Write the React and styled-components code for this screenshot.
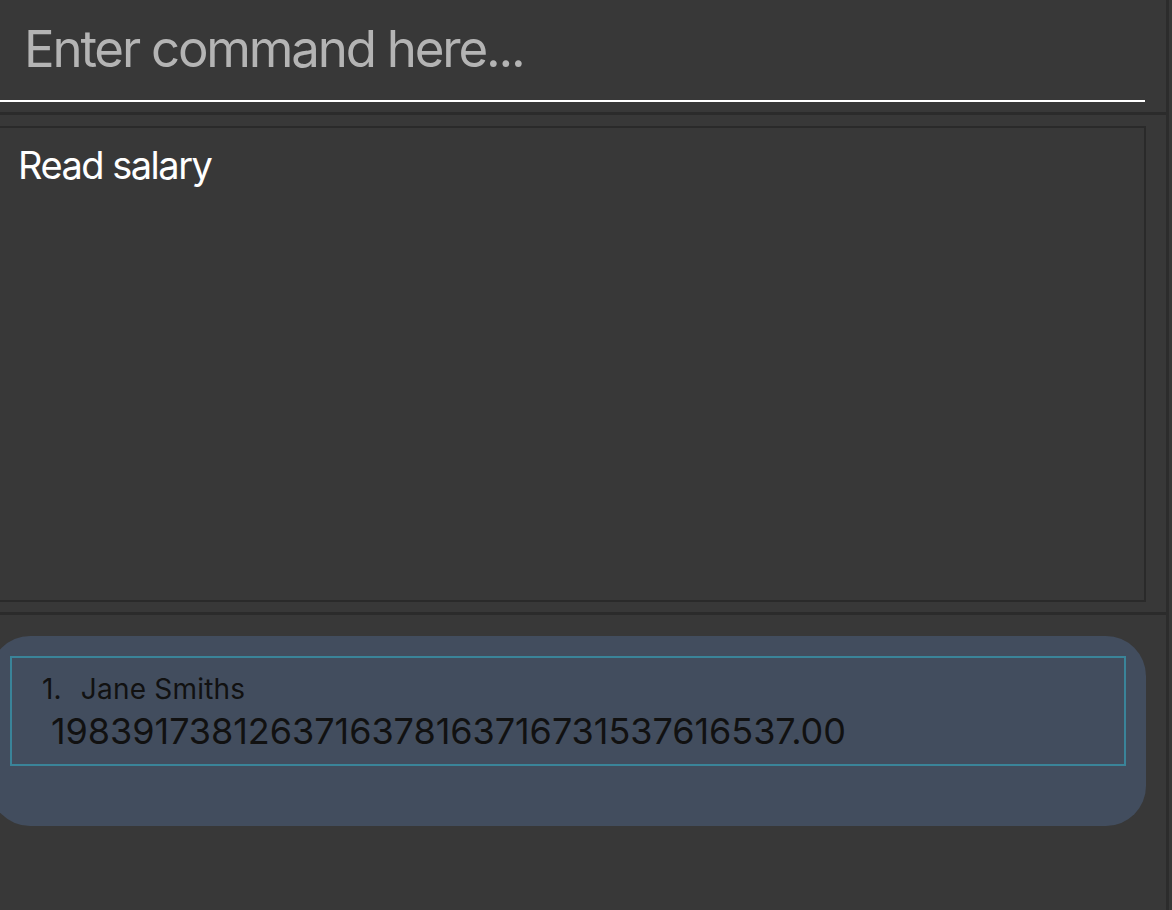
import React from "react";
import styled, { createGlobalStyle } from "styled-components";

const Global = createGlobalStyle`
  html, body {
    margin: 0;
    padding: 0;
    background: #383838;
    overflow: hidden;
  }
  body {
    font-family: Inter, "Open Sans", "Liberation Sans", sans-serif;
  }
`;

const Window = styled.div`
  display: flex;
  width: 1172px;
  height: 910px;
  background: #383838;
`;

const Main = styled.div`
  width: 1166px;
  display: flex;
  flex-direction: column;
  border-right: 3px solid #2c2c2c;
  overflow: hidden;
`;

const CommandBox = styled.div`
  height: 112px;
  display: flex;
  flex-direction: column;
  box-sizing: border-box;
`;

const CommandInput = styled.input`
  width: 1145px;
  height: 102px;
  box-sizing: border-box;
  background: transparent;
  border: none;
  border-bottom: 2px solid #ffffff;
  outline: none;
  padding: 0 0 4px 24px;
  font-family: Inter, "Liberation Sans", sans-serif;
  font-size: 51px;
  letter-spacing: -2.2px;
  color: #ffffff;
  &::placeholder {
    color: #b4b4b4;
  }
`;

const Divider = styled.div`
  height: 3px;
  background: #2b2b2b;
  flex-shrink: 0;
`;

const ResultPane = styled.div`
  padding: 11px 0 10px 0;
`;

const ResultBox = styled.div`
  width: 1146px;
  height: 476px;
  box-sizing: border-box;
  border: 2px solid #2a2a2a;
  border-left: none;
  padding: 18px 18px;
  color: #ffffff;
  font-size: 38px;
  line-height: 1;
  letter-spacing: -1.5px;
`;

const ListPane = styled.div`
  padding-top: 21px;
  flex: 1;
`;

const Card = styled.div`
  width: 1156px;
  height: 190px;
  margin-left: -10px;
  box-sizing: border-box;
  background: #424d5e;
  border-radius: 40px;
  padding: 20px 0 0 20px;
`;

const Cell = styled.div`
  width: 1116px;
  height: 110px;
  box-sizing: border-box;
  border: 2px solid #3a8499;
  padding: 14px 0 0 30px;
  display: flex;
  flex-direction: column;
  color: #111111;
`;

const NameRow = styled.div`
  display: flex;
  gap: 19px;
  font-size: 28px;
  line-height: 34px;
  letter-spacing: 0.2px;
`;

const Salary = styled.div`
  padding-left: 9px;
  margin-top: 4px;
  font-size: 36px;
  line-height: 42px;
  letter-spacing: -0.05px;
`;

export default function App() {
  return (
    <>
      <Global />
      <Window>
        <Main>
          <CommandBox>
            <CommandInput placeholder="Enter command here..." />
          </CommandBox>
          <Divider />
          <ResultPane>
            <ResultBox>Read salary</ResultBox>
          </ResultPane>
          <Divider />
          <ListPane>
            <Card>
              <Cell>
                <NameRow>
                  <span>1.</span>
                  <span>Jane Smiths</span>
                </NameRow>
                <Salary>1983917381263716378163716731537616537.00</Salary>
              </Cell>
            </Card>
          </ListPane>
        </Main>
      </Window>
    </>
  );
}
